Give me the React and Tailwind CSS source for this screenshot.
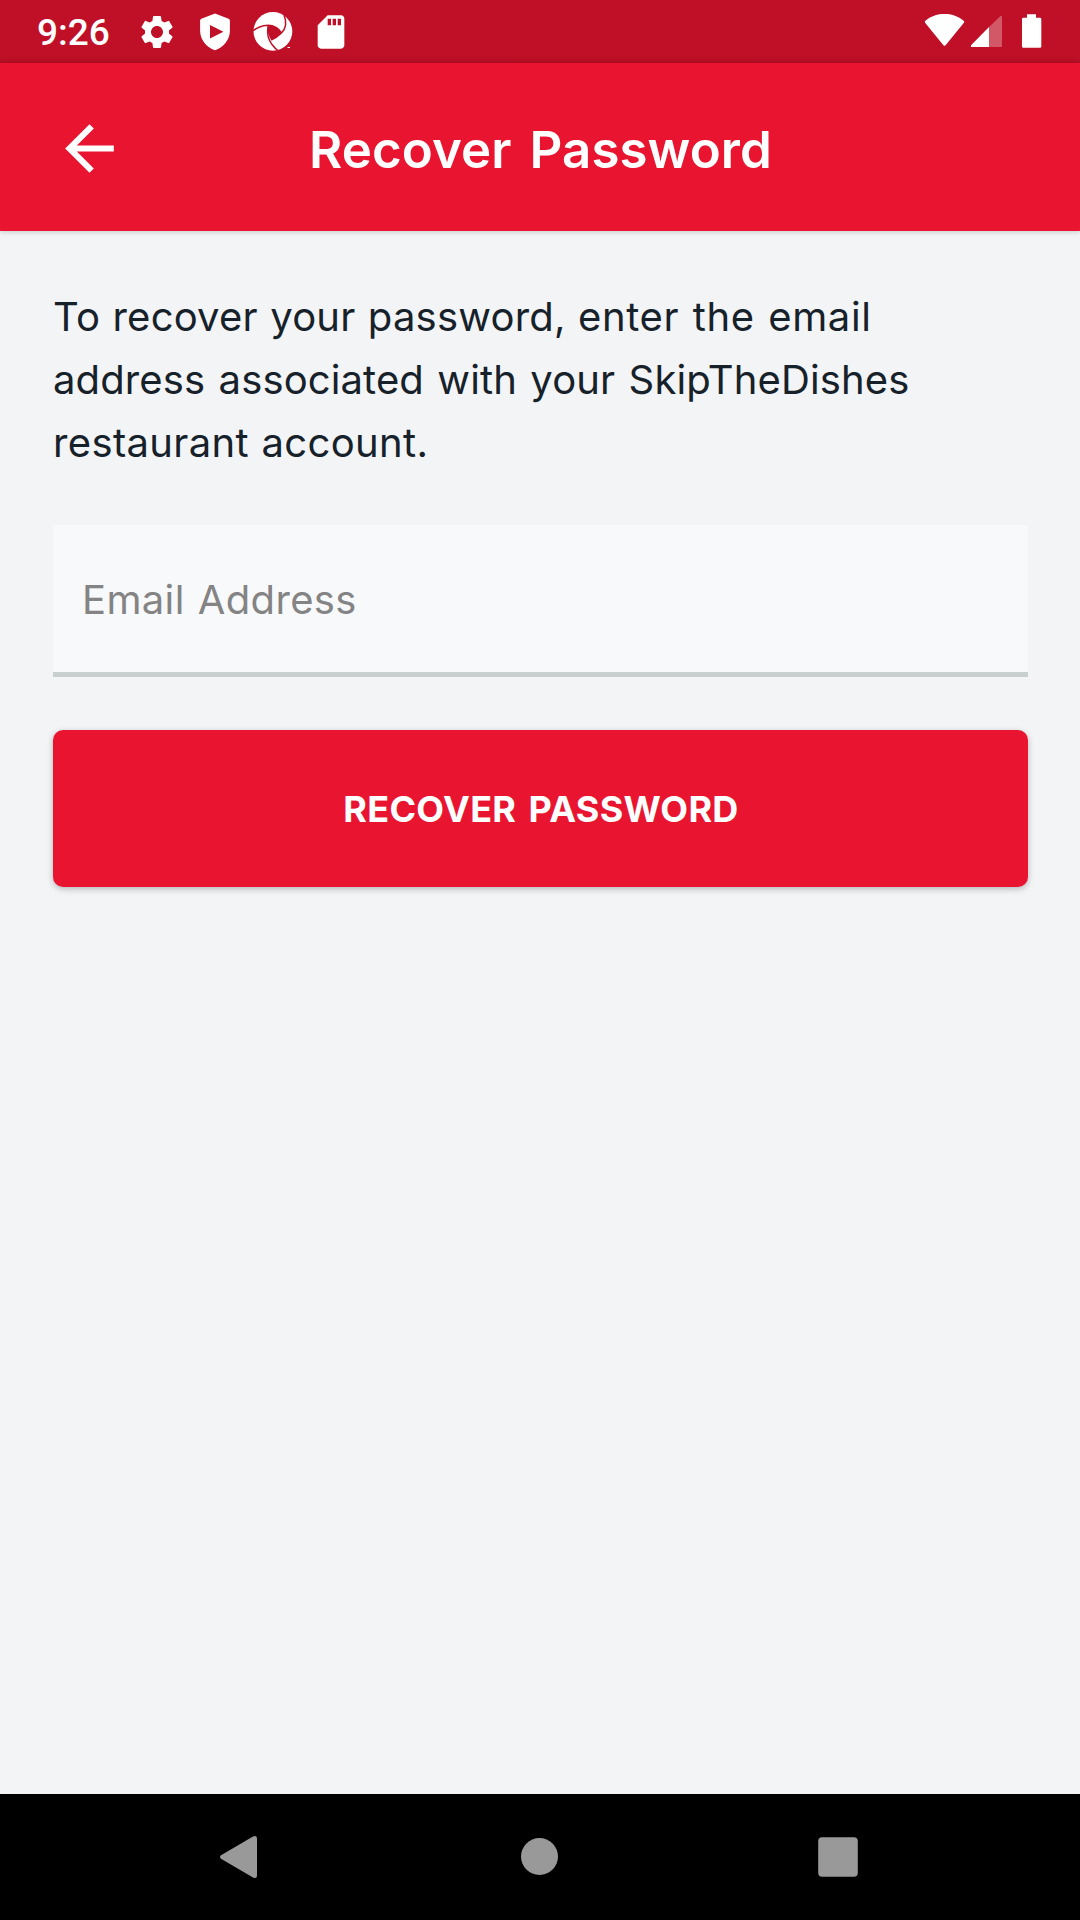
import React from "react";
import { MdSettings, MdSdCard, MdArrowBack } from "react-icons/md";

function ShieldPlayIcon() {
  return (
    <svg className="h-10 w-10" viewBox="0 0 40 40">
      <path
        fill="#fff"
        fillRule="evenodd"
        d="M20 1.6 33.6 6.7Q34.9 7.2 34.9 8.6V18.5C34.9 28 28.5 35.2 20 38.2 11.5 35.2 5.1 28 5.1 18.5V8.6Q5.1 7.2 6.4 6.7ZM15 13V26.4L28.4 19.7Z"
      />
    </svg>
  );
}

function ApertureIcon() {
  return (
    <svg className="h-10 w-10" viewBox="0 0 40 40">
      <circle cx="19.9" cy="19.4" r="19.4" fill="#fff" />
      <path fill="#bf1027" d="M15.3 13.6Q23 12.5 28.6 20.6 25 25 18.2 28 13.6 21.5 15.3 13.6Z" />
      <g fill="none" stroke="#bf1027" strokeWidth="1.5">
        <path d="M0 19Q5 14 15 13.2 24 13.5 28.4 20.8" />
        <path d="M31 3Q35.5 14 28.4 21 24 25.5 18.2 28" />
        <path d="M26 39.5Q17.5 33 15.3 25 14 19 15.3 13.4" />
      </g>
      <path stroke="#fff" strokeWidth="1" d="M34.5 35.5H37" />
    </svg>
  );
}

function WifiIcon() {
  return (
    <svg className="h-10 w-[42px]" viewBox="0 0 42 40">
      <path
        fill="#fff"
        d="M1.1 10.8Q.2 9.6 1.4 8.7C7.5 3.8 13.8 2 20.5 2S33.5 3.8 39.6 8.7Q40.8 9.6 39.9 10.8L21.6 33.2Q20.5 34.4 19.4 33.2Z"
      />
    </svg>
  );
}

function SignalIcon() {
  return (
    <svg className="h-10 w-[34px]" viewBox="0 0 34 40">
      <path fill="#fff" fillOpacity=".3" d="M19 35V15L30 4.4Q32 3 32 5.2V34Q32 35 31 35Z" />
      <path fill="#fff" d="M19 15V35H2Q0 35 1.3 33Z" />
    </svg>
  );
}

function BatteryIcon() {
  return (
    <svg className="h-10 w-6" viewBox="0 0 24 40">
      <path
        fill="#fff"
        d="M7 2.3H16V5.8H20Q21.3 5.8 21.3 7.1V34.5Q21.3 35.8 20 35.8H3.3Q2 35.8 2 34.5V7.1Q2 5.8 3.3 5.8H7Z"
      />
    </svg>
  );
}

function StatusBar() {
  return (
    <div className="flex h-[63px] items-start justify-between bg-[linear-gradient(to_bottom,#bf1027_0,#bf1027_56px,#b30f25_63px)] pt-3 pr-9 pl-[37px]">
      <div className="flex">
        <span className="w-[100px] pt-px font-['Roboto',sans-serif] text-[37px] leading-10 font-medium text-white">
          9:26
        </span>
        <div className="flex gap-[18px] text-white">
          <MdSettings className="h-10 w-10" />
          <ShieldPlayIcon />
          <ApertureIcon />
          <MdSdCard className="h-10 w-10" />
        </div>
      </div>
      <div className="flex">
        <WifiIcon />
        <span className="w-1" />
        <SignalIcon />
        <span className="w-4" />
        <BatteryIcon />
      </div>
    </div>
  );
}

function Header() {
  return (
    <header className="grid h-[168px] grid-cols-[200px_1fr_200px] items-center bg-[#e91530] shadow-[0_1px_5px_rgba(0,0,0,0.18)]">
      <button className="ml-[53px] h-[75px] w-[73px] pt-0.5 text-white">
        <MdArrowBack className="h-[73px] w-[73px]" />
      </button>
      <h1 className="pt-1.5 pl-px text-center text-[51px] font-semibold tracking-[0.08px] whitespace-nowrap text-white [word-spacing:5px]">
        Recover Password
      </h1>
    </header>
  );
}

function NavBar() {
  return (
    <nav className="grid h-[126px] grid-cols-3 place-items-center bg-black px-[90px]">
      <svg className="h-12 w-12" viewBox="0 0 48 48">
        <path fill="#999" d="M5 22.3 37 3.5Q41 1.7 41 5.5V42.5Q41 46.3 37 44.5L5 25.7Q3 24 5 22.3Z" />
      </svg>
      <svg className="h-12 w-12" viewBox="0 0 48 48">
        <circle cx="23.5" cy="23.5" r="18.5" fill="#999" />
      </svg>
      <svg className="h-12 w-12" viewBox="0 0 48 48">
        <rect x="2.2" y="4.2" width="39.6" height="39.6" rx="4" fill="#999" />
      </svg>
    </nav>
  );
}

export default function App() {
  return (
    <div className="flex h-[1920px] w-[1080px] flex-col overflow-hidden bg-[#f2f4f6] font-['Inter',sans-serif]">
      <StatusBar />
      <Header />
      <main className="flex flex-1 flex-col pt-[54px] pr-[52px] pl-[53px]">
        <p className="text-[40px] leading-[63px] whitespace-nowrap text-[#17212a]">
          <span className="block tracking-[0.6px] [word-spacing:1.8px]">
            <span className="tracking-[0.2px] [word-spacing:1px]">To recover your password, </span>
            enter the email
          </span>
          <span className="block tracking-[0.12px] [word-spacing:2px]">
            address associated with your SkipTheDishes
          </span>
          <span className="block tracking-[0.35px] [word-spacing:1px]">restaurant account.</span>
        </p>
        <input
          type="email"
          placeholder="Email Address"
          className="mt-[51px] h-[152px] border-b-[5px] border-[#c9cecf] bg-[#f8f9fb] pt-0.5 pl-[29px] text-[40px] tracking-[0.35px] text-[#17212a] [word-spacing:1.5px] placeholder:text-[#848484]"
        />
        <button className="mt-[53px] h-[157px] rounded-[10px] bg-[#e91530] pl-px text-[36px] font-bold tracking-[0.3px] text-white shadow-[0_2px_6px_rgba(0,0,0,0.25)] [word-spacing:3.5px]">
          RECOVER PASSWORD
        </button>
      </main>
      <NavBar />
    </div>
  );
}
